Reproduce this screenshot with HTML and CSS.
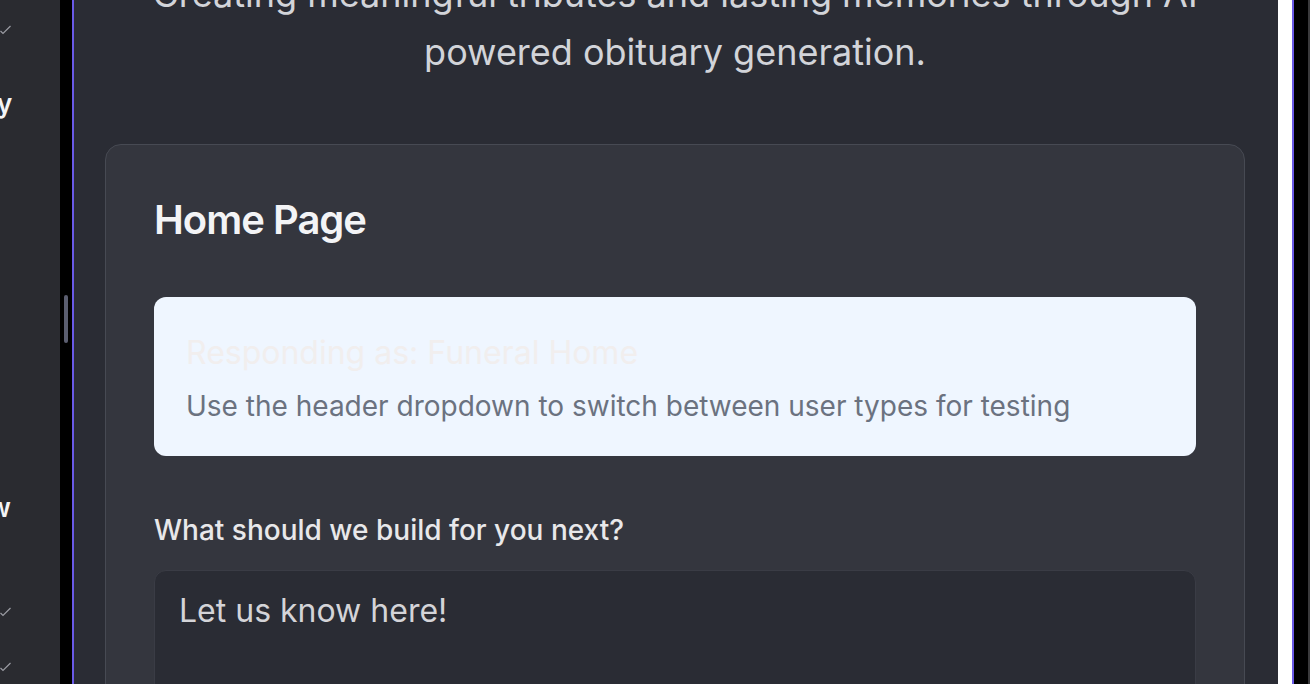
FILE: index.html
```html
<!DOCTYPE html>
<html lang="en">
<head>
<meta charset="utf-8">
<title>Home Page</title>
<link rel="stylesheet" href="styles.css">
</head>
<body>
  <aside class="side">
    <svg class="check check-1" width="11" height="10" viewBox="0 0 11 10"><polyline points="0.5,6 3,8.5 10.5,1" fill="none" stroke="#9b9ca3" stroke-width="1.2"/></svg>
    <div class="frag frag-y">y</div>
    <div class="frag frag-w">w</div>
    <svg class="check check-2" width="11" height="10" viewBox="0 0 11 10"><polyline points="0.5,6 3,8.5 10.5,1" fill="none" stroke="#9b9ca3" stroke-width="1.2"/></svg>
    <svg class="check check-3" width="11" height="10" viewBox="0 0 11 10"><polyline points="0.5,6 3,8.5 10.5,1" fill="none" stroke="#9b9ca3" stroke-width="1.2"/></svg>
  </aside>
  <div class="gutter"><div class="handle"></div></div>
  <div class="frame">
    <main class="page">
      <div class="inner">
        <p class="subtitle">Creating meaningful tributes and lasting memories through AI powered obituary generation.</p>
        <section class="card">
          <h1 class="card-title">Home Page</h1>
          <div class="info">
            <div class="info-title">Responding as: Funeral Home</div>
            <div class="info-text">Use the header dropdown to switch between user types for testing</div>
          </div>
          <label class="field-label" for="next">What should we build for you next?</label>
          <textarea id="next" class="field" placeholder="Let us know here!"></textarea>
        </section>
      </div>
    </main>
    <div class="track"></div>
  </div>
  <div class="edge"></div>
  <div class="edge-2"></div>
</body>
</html>
```
FILE: styles.css
```css
* { box-sizing: border-box; }
html, body { height: 100%; }
body {
  margin: 0;
  display: flex;
  height: 684px;
  overflow: hidden;
  background: #000;
  font-family: "Inter", "Noto Sans", sans-serif;
}
.side {
  width: 60px;
  flex: none;
  background: #2a2b30;
  display: flex;
  flex-direction: column;
  align-items: flex-start;
  overflow: hidden;
}
.check { display: block; flex: none; }
.check-1 { margin-top: 25px; }
.frag {
  color: #f4f4f5;
  font-size: 26px;
  font-weight: 600;
  line-height: 26px;
  height: 26px;
}
.frag-y { margin-top: 56px; margin-left: -3px; }
.frag-w { margin-top: 378px; margin-left: -11px; }
.check-2 { margin-top: 86px; }
.check-3 { margin-top: 45px; }
.gutter {
  width: 12px;
  flex: none;
  background: #000;
  display: flex;
  justify-content: center;
}
.handle {
  margin-top: 295px;
  width: 4px;
  height: 48px;
  border-radius: 2px;
  background: #5b5e70;
}
.frame {
  width: 1222px;
  flex: none;
  display: flex;
  border-left: 2px solid #6a5ae6;
  border-right: 2px solid #6a5ae6;
}
.page {
  flex: 1;
  background: #2a2c34;
  overflow: hidden;
  padding: 0 33px 0 31px;
}
.inner { margin-top: -34px; }
.track { width: 14px; flex: none; background: #fff; }
.edge { width: 14px; flex: none; background: #000; }
.edge-2 { width: 2px; flex: none; background: #3a3a3c; }
.subtitle {
  margin: 0 auto;
  max-width: 1080px;
  text-align: center;
  color: #d2d4d9;
  font-size: 36px;
  line-height: 57.6px;
}
.card {
  margin-top: 63px;
  background: #34363e;
  border: 1px solid #474a53;
  border-radius: 16px;
  padding: 48px;
}
.card-title {
  margin: 3px 0 53px;
  color: #f3f4f6;
  font-size: 40px;
  font-weight: 600;
  line-height: 48px;
  letter-spacing: -1px;
}
.info {
  background: #eff6ff;
  border-radius: 12px;
  padding: 36px 32px 30px;
}
.info-title {
  color: #f1eeee;
  font-size: 32px;
  line-height: 40px;
}
.info-text {
  margin-top: 13px;
  color: #6b7280;
  font-size: 28px;
  line-height: 40px;
}
.field-label {
  display: block;
  margin-top: 54px;
  margin-bottom: 20px;
  color: #e8e8ea;
  font-size: 28px;
  font-weight: 500;
  line-height: 40px;
}
.field {
  display: block;
  width: 100%;
  height: 200px;
  resize: none;
  background: #2a2c34;
  border: 1px solid #3a3c45;
  border-radius: 12px;
  padding: 20px 24px 16px;
  font-family: inherit;
  font-size: 32px;
  line-height: 40px;
  color: #e4e4e7;
  outline: none;
}
.field::placeholder { color: #d4d4d8; opacity: 1; }
```
